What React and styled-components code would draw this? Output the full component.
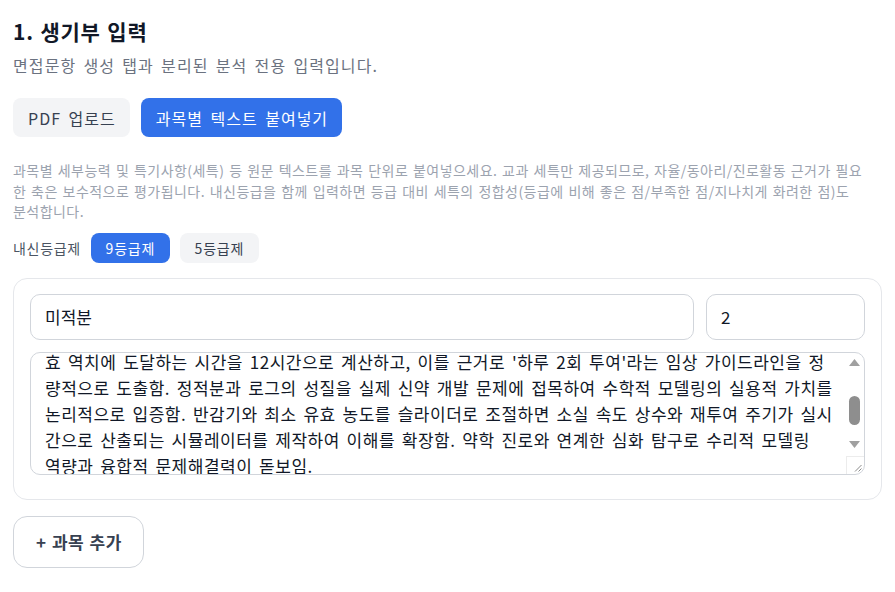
import React, { useLayoutEffect, useRef, useState } from 'react';
import styled, { createGlobalStyle } from 'styled-components';

const GlobalStyle = createGlobalStyle`
  html, body {
    margin: 0;
    padding: 0;
    background: #ffffff;
  }
  body {
    font-family: "Noto Sans CJK KR", "Noto Sans", sans-serif;
    color: #111827;
  }
  * {
    box-sizing: border-box;
  }
`;

const Page = styled.div`
  padding: 15px 13px 24px;
`;

const Title = styled.h2`
  margin: 0;
  font-size: 21px;
  line-height: 32px;
  font-weight: 700;
  letter-spacing: 0.8px;
  word-spacing: 1px;
  color: #111827;
`;

const Subtitle = styled.p`
  margin: 6px 0 0;
  font-size: 16px;
  line-height: 24px;
  letter-spacing: 1.1px;
  word-spacing: 2.5px;
  color: #6b7280;
`;

const ModeTabs = styled.div`
  display: flex;
  gap: 11px;
  margin-top: 21px;
`;

const ModeButton = styled.button`
  height: 39px;
  padding: 0 14px 0 15px;
  border: none;
  border-radius: 8px;
  font-family: inherit;
  font-size: 16px;
  letter-spacing: 1px;
  word-spacing: 3px;
  cursor: pointer;
  background-color: ${(props) => (props.$active ? '#3271e9' : '#f3f4f6')};
  color: ${(props) => (props.$active ? '#ffffff' : '#374151')};
`;

const Help = styled.p`
  margin: 23px 0 0;
  font-size: 14px;
  line-height: 20.5px;
  letter-spacing: 0.45px;
  word-spacing: 1.2px;
  color: #9ca3af;
`;

const GradeRow = styled.div`
  display: flex;
  align-items: center;
  gap: 10px;
  margin-top: 11px;
`;

const GradeLabel = styled.span`
  font-size: 14px;
  letter-spacing: 0.7px;
  color: #4b5563;
`;

const Chip = styled.button`
  width: 79px;
  height: 30px;
  border: none;
  border-radius: 8px;
  font-family: inherit;
  font-size: 14px;
  letter-spacing: 0.8px;
  cursor: pointer;
  background-color: ${(props) => (props.$active ? '#3271e9' : '#f3f4f6')};
  color: ${(props) => (props.$active ? '#ffffff' : '#374151')};
`;

const SubjectCard = styled.div`
  margin-top: 15px;
  padding: 15px 16px 24px;
  border: 1px solid #e5e7eb;
  border-radius: 14px;
  background: #ffffff;
`;

const FieldRow = styled.div`
  display: grid;
  grid-template-columns: 1fr 159px;
  gap: 12px;
`;

const Field = styled.input`
  height: 46px;
  padding: 0 14px;
  border: 1px solid #d1d5db;
  border-radius: 10px;
  font-family: inherit;
  font-size: 17px;
  color: #111827;
  outline: none;
`;

const DetailBox = styled.div`
  display: flex;
  height: 123px;
  margin-top: 12px;
  border: 1px solid #d1d5db;
  border-radius: 10px;
  overflow: hidden;
  background: #ffffff;
`;

const Detail = styled.textarea`
  flex: 1;
  min-width: 0;
  height: 100%;
  padding: 10px 4px 10px 14px;
  border: none;
  background: transparent;
  font-family: inherit;
  font-size: 17px;
  line-height: 26px;
  letter-spacing: 0.5px;
  word-spacing: 2.5px;
  color: #111827;
  resize: none;
  overflow: hidden;
  outline: none;
`;

/* classic scrollbar column drawn next to the text box */
const Rail = styled.div`
  display: flex;
  flex-direction: column;
  width: 18px;
  padding-top: 2px;
`;

const RailArrow = styled.div`
  display: flex;
  align-items: center;
  justify-content: center;
  height: 15px;
  padding-right: 1px;
`;

const Track = styled.div`
  flex: 1;
  display: flex;
  justify-content: center;
  padding-right: 1px;
`;

const Thumb = styled.div`
  width: 11px;
  height: 29px;
  margin-top: 26px;
  border-radius: 6px;
  background: #8e8e8e;
`;

const Corner = styled.div`
  display: flex;
  align-items: flex-end;
  justify-content: flex-end;
  height: 18px;
  margin-top: 4px;
  border-top: 1px solid #ececec;
  border-left: 1px solid #ececec;
  padding: 0 2px 2px 0;
`;

const AddButton = styled.button`
  margin-top: 16px;
  height: 52px;
  padding: 0 21px 0 22px;
  border: 1px solid #d1d5db;
  border-radius: 14px;
  background: #ffffff;
  font-family: inherit;
  font-size: 17px;
  font-weight: 700;
  letter-spacing: 0.5px;
  word-spacing: 1px;
  color: #374151;
  cursor: pointer;
`;

const hiddenLines = [
  '지수함수와 로그함수 단원에서 배운 내용을 바탕으로 약물의 혈중 농도가 시간에 따라',
  '일정한 비율로 감소한다는 점에 주목하여 항생제의 반감기 모델을 직접 세움. 미분을',
  '활용해 농도의 순간 감소율을 구하고, 정적분으로 일정 시간 동안의 체내 누적',
  '노출량을 계산하였으며, 이를 통해 투여 직후부터 혈중 농도가 점차 줄어 최소 유',
];

const visibleLines = [
  "효 역치에 도달하는 시간을 12시간으로 계산하고, 이를 근거로 '하루 2회 투여'라는 임상 가이드라인을 정",
  '량적으로 도출함. 정적분과 로그의 성질을 실제 신약 개발 문제에 접목하여 수학적 모델링의 실용적 가치를',
  '논리적으로 입증함. 반감기와 최소 유효 농도를 슬라이더로 조절하면 소실 속도 상수와 재투여 주기가 실시',
  '간으로 산출되는 시뮬레이터를 제작하여 이해를 확장함. 약학 진로와 연계한 심화 탐구로 수리적 모델링',
  '역량과 융합적 문제해결력이 돋보임.',
];

const detailText = [...hiddenLines, ...visibleLines].join('\n');

const ArrowUp = () => (
  <svg width="11" height="7" viewBox="0 0 11 7">
    <polygon points="0,7 5.5,0 11,7" fill="#a0a0a0" />
  </svg>
);

const ArrowDown = () => (
  <svg width="11" height="7" viewBox="0 0 11 7">
    <polygon points="0,0 11,0 5.5,7" fill="#a0a0a0" />
  </svg>
);

const Grip = () => (
  <svg width="8" height="8" viewBox="0 0 8 8">
    <line x1="1" y1="7.5" x2="7.5" y2="1" stroke="#8a8a8a" strokeWidth="1" />
    <line x1="4.5" y1="7.5" x2="7.5" y2="4.5" stroke="#8a8a8a" strokeWidth="1" />
  </svg>
);

export default function App() {
  const [mode, setMode] = useState('text');
  const [grade, setGrade] = useState(9);
  const [subject, setSubject] = useState('미적분');
  const [level, setLevel] = useState('2');
  const [detail, setDetail] = useState(detailText);
  const detailRef = useRef(null);

  useLayoutEffect(() => {
    if (detailRef.current) {
      detailRef.current.scrollTop = hiddenLines.length * 26 + 14;
    }
  }, []);

  return (
    <>
      <GlobalStyle />
      <Page>
        <Title>1. 생기부 입력</Title>
        <Subtitle>면접문항 생성 탭과 분리된 분석 전용 입력입니다.</Subtitle>

        <ModeTabs>
          <ModeButton $active={mode === 'pdf'} onClick={() => setMode('pdf')}>
            PDF 업로드
          </ModeButton>
          <ModeButton $active={mode === 'text'} onClick={() => setMode('text')}>
            과목별 텍스트 붙여넣기
          </ModeButton>
        </ModeTabs>

        <Help>
          과목별 세부능력 및 특기사항(세특) 등 원문 텍스트를 과목 단위로 붙여넣으세요. 교과 세특만 제공되므로, 자율/동아리/진로활동 근거가 필요
          <br />
          한 축은 보수적으로 평가됩니다. 내신등급을 함께 입력하면 등급 대비 세특의 정합성(등급에 비해 좋은 점/부족한 점/지나치게 화려한 점)도
          <br />
          분석합니다.
        </Help>

        <GradeRow>
          <GradeLabel>내신등급제</GradeLabel>
          <Chip $active={grade === 9} onClick={() => setGrade(9)}>9등급제</Chip>
          <Chip $active={grade === 5} onClick={() => setGrade(5)}>5등급제</Chip>
        </GradeRow>

        <SubjectCard>
          <FieldRow>
            <Field value={subject} onChange={(e) => setSubject(e.target.value)} />
            <Field value={level} onChange={(e) => setLevel(e.target.value)} />
          </FieldRow>
          <DetailBox>
            <Detail
              ref={detailRef}
              wrap="off"
              value={detail}
              onChange={(e) => setDetail(e.target.value)}
            />
            <Rail>
              <RailArrow><ArrowUp /></RailArrow>
              <Track><Thumb /></Track>
              <RailArrow><ArrowDown /></RailArrow>
              <Corner><Grip /></Corner>
            </Rail>
          </DetailBox>
        </SubjectCard>

        <AddButton>+ 과목 추가</AddButton>
      </Page>
    </>
  );
}
